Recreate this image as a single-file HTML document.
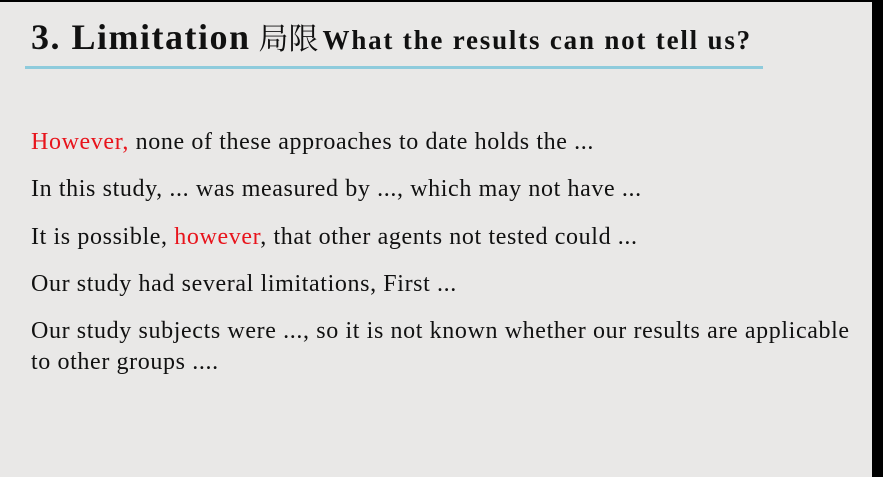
<!DOCTYPE html>
<html><head><style>
html,body{margin:0;padding:0;width:883px;height:477px;overflow:hidden;background:#000;}
.s{position:absolute;left:0;top:2px;width:872px;height:475px;background:#e9e8e7;}
.t{position:absolute;left:31px;top:12px;white-space:nowrap;font-family:"Liberation Serif","Times New Roman",Tinos,Times,"DejaVu Serif",serif;color:#111;}
.t b{font-size:36px;letter-spacing:1.5px;}
.t .c{font-size:30px;font-weight:normal;font-family:"Noto Serif CJK SC","Noto Sans CJK SC",serif;margin-left:4px;}
.t .w{font-size:27px;font-weight:bold;letter-spacing:1.8px;}
.line{position:absolute;left:25px;top:64px;width:738px;height:3px;background:#8ecbdc;}
.p{position:absolute;left:31px;font-family:"Liberation Serif","Times New Roman",Tinos,Times,"DejaVu Serif",serif;font-size:24px;letter-spacing:0.62px;color:#111;white-space:nowrap;line-height:31px;}
.r{color:#e8141c;}
</style></head><body>
<div class="s">
<div class="t"><b>3. Limitation</b> <span class="c">局限</span> <span class="w">What the results can not tell us?</span></div>
<div class="line"></div>
<div class="p" style="top:125px"><span class="r">However,</span> none of these approaches to date holds the ...</div>
<div class="p" style="top:172px">In this study, ... was measured by ..., which may not have ...</div>
<div class="p" style="top:220px">It is possible, <span class="r">however</span>, that other agents not tested could ...</div>
<div class="p" style="top:267px">Our study had several limitations, First ...</div>
<div class="p" style="top:314px">Our study subjects were ..., so it is not known whether our results are applicable<br>to other groups ....</div>
</div>
</body></html>
